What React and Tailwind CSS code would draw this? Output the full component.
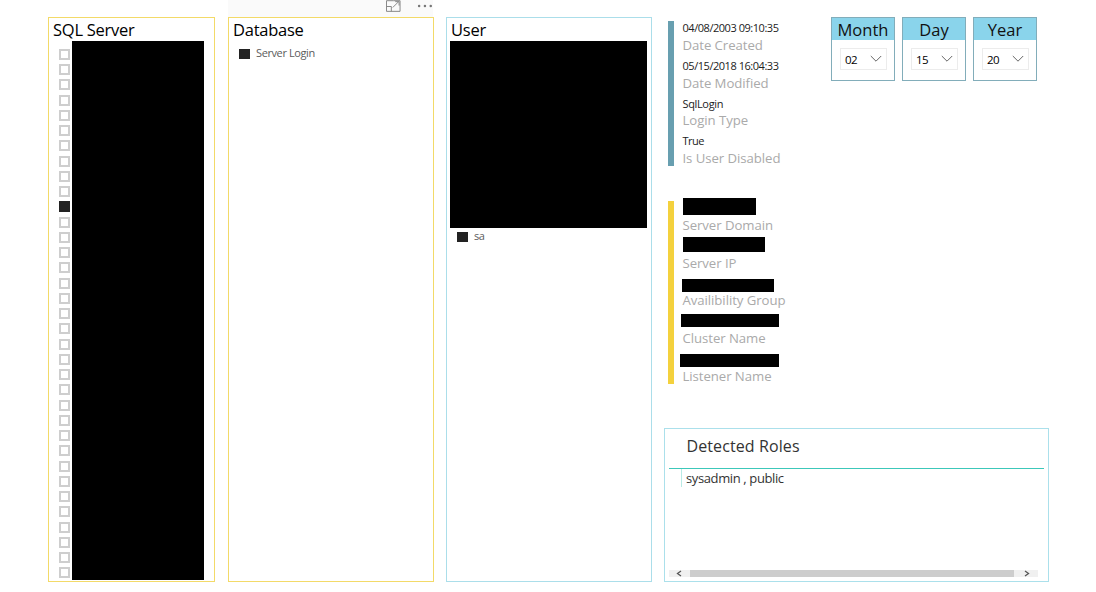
const SERVER_ROWS = Array.from({ length: 35 }, (_, i) => i === 10);

const LOGIN_FACTS = [
  { value: '04/08/2003 09:10:35', label: 'Date Created', item: 'h-[38px]', line: 'h-[16px] tracking-[-0.46px]' },
  { value: '05/15/2018 16:04:33', label: 'Date Modified', item: 'h-[38px]', line: 'h-[16px] tracking-[-0.46px]' },
  { value: 'SqlLogin', label: 'Login Type', item: 'h-[37px]', line: 'h-[15px] tracking-[-0.35px]' },
  { value: 'True', label: 'Is User Disabled', item: 'h-[38px]', line: 'h-[16px] tracking-[-0.55px]' },
];

const SERVER_FACTS = [
  { label: 'Server Domain', item: 'h-[38px]', bar: 'mt-[3px] ml-[0.5px] h-[17px] w-[73px]' },
  { label: 'Server IP', item: 'h-[37px]', bar: 'mt-[4px] ml-[0.5px] h-[15px] w-[82px]' },
  { label: 'Availibility Group', item: 'h-[38px]', bar: 'mt-[9px] -ml-[0.5px] h-[13px] w-[92px]' },
  { label: 'Cluster Name', item: 'h-[38px]', bar: 'mt-[6px] -ml-[1.5px] h-[13px] w-[98px]' },
  { label: 'Listener Name', item: 'h-[38px]', bar: 'mt-[8px] -ml-[2.5px] h-[13px] w-[99px]' },
];

const SLICERS = [
  { title: 'Month', value: '02' },
  { title: 'Day', value: '15' },
  { title: 'Year', value: '20' },
];

function Title({ children }) {
  return (
    <h2 className="h-[23px] shrink-0 pl-[4px] text-[16.5px] leading-[23px] tracking-[-0.25px] text-black">{children}</h2>
  );
}

function Checked({ label }) {
  return (
    <div className="flex h-[16px] items-center pl-[10px]">
      <span className="mt-[2px] h-[10.5px] w-[11px] bg-[#222]" />
      <span className="ml-[6px] text-[11px] leading-[16px] tracking-[-0.4px] text-[#5c5c5c]">{label}</span>
    </div>
  );
}

function Chevron() {
  return (
    <svg width="12" height="8" viewBox="0 0 12 8" fill="none" stroke="#666" strokeWidth="1">
      <path d="M0.8 1 L6 6.2 L11.2 1" />
    </svg>
  );
}

export default function App() {
  return (
    <main className="flex h-[592px] w-[1096px] items-start overflow-hidden bg-white pl-[48px] font-['Open_Sans','Noto_Sans',sans-serif]">
      <section className="mt-[17px] flex h-[565px] w-[167px] flex-col border border-[#f3da68]">
        <Title>SQL Server</Title>
        <div className="flex">
          <div className="flex h-[537px] w-[23px] flex-col overflow-hidden pt-[7.75px] pl-[10px]">
            {SERVER_ROWS.map((on, i) => (
              <span key={i} className="flex h-[15.25px] shrink-0 items-start">
                {on ? (
                  <span className="h-[11px] w-[11px] bg-[#222]" />
                ) : (
                  <span className="size-[11px] border-2 border-[#cecece] bg-white" />
                )}
              </span>
            ))}
          </div>
          <div className="h-[539px] w-[132px] bg-black" />
        </div>
      </section>

      <section className="ml-[13px] w-[206px]">
        <div className="flex h-[17px] w-[205px] items-start bg-[#fafafa] pl-[158px]">
          <svg width="15" height="13" viewBox="0 0 15 13" fill="none" stroke="#858585" strokeWidth="1">
            <path d="M8 0.5H0.5V11.5H14.5V0.5H8M0.5 6.5H5.5V11.5M7 7.5L13 1.5M9.5 1.5H13.5V5.5" />
          </svg>
          <svg className="ml-[16px]" width="17" height="13" viewBox="0 0 17 13" fill="#777">
            <circle cx="2.2" cy="6" r="1.3" />
            <circle cx="8.2" cy="6" r="1.3" />
            <circle cx="14.2" cy="6" r="1.3" />
          </svg>
        </div>
        <div className="h-[565px] border border-[#f3da68]">
          <Title>Database</Title>
          <div className="pt-[4px]">
            <Checked label="Server Login" />
          </div>
        </div>
      </section>

      <section className="mt-[17px] ml-[12px] h-[565px] w-[206px] border border-[#abdeea]">
        <Title>User</Title>
        <div className="ml-[3px] h-[187px] w-[197px] bg-black" />
        <Checked label="sa" />
      </section>

      <div className="ml-[12px] flex h-[592px] w-[385px] flex-col">
        <div className="flex h-[195px] items-start">
          <div className="mt-[21px] ml-[4px] h-[145px] w-[6.4px] bg-[#689fb0]" />
          <dl className="mt-[20px] ml-[8.1px] w-[148.5px]">
            {LOGIN_FACTS.map((f) => (
              <div key={f.label} className={f.item}>
                <dd className={`text-[11px] leading-[16px] text-[#222] ${f.line}`}>{f.value}</dd>
                <dt className="text-[13.2px] leading-[18px] tracking-[-0.06px] text-[#aaa]">{f.label}</dt>
              </div>
            ))}
          </dl>
          <div className="mt-[17px] flex gap-[7px]">
            {SLICERS.map((s) => (
              <div key={s.title} className="h-[64px] w-[64px] border border-[#82adba]">
                <h3 className="h-[22px] bg-[#8ad4eb] text-center text-[16.5px] leading-[24px] text-[#111]">{s.title}</h3>
                <div className="mt-[8px] ml-[8px] flex h-[22px] w-[47px] items-center justify-between border border-[#ececec] pr-[4px] pl-[4px]">
                  <span className="pt-px text-[11.5px] leading-[20px] tracking-[-0.6px] text-black">{s.value}</span>
                  <Chevron />
                </div>
              </div>
            ))}
          </div>
        </div>

        <div className="flex h-[233px] items-start">
          <div className="mt-[6px] ml-[4px] h-[183px] w-[6.4px] bg-[#f4d13d]" />
          <dl className="ml-[8.1px] w-[148px]">
            {SERVER_FACTS.map((f) => (
              <div key={f.label} className={f.item}>
                <dd className="flex h-[21px] items-start">
                  <span className={`shrink-0 bg-black ${f.bar}`} />
                </dd>
                <dt className="text-[13.2px] leading-[18px] tracking-[-0.06px] text-[#aaa]">{f.label}</dt>
              </div>
            ))}
          </dl>
        </div>

        <section className="flex h-[154px] flex-col border border-[#abe0eb] px-[4px]">
          <h2 className="h-[39px] pl-[17.5px] text-[16px] leading-[34px] tracking-[0.1px] text-[#333]">Detected Roles</h2>
          <div className="h-px shrink-0 bg-[#3cc8ba]" />
          <div className="flex h-[18px] shrink-0">
            <div className="ml-[12px] w-px bg-[#b9ebe5]" />
            <p className="ml-[4px] text-[13px] leading-[18px] tracking-[-0.38px] text-[#333]">sysadmin , public</p>
          </div>
          <div className="mt-[83px] flex h-[7px] w-[369px] shrink-0 items-center bg-[#f0f0f0]">
            <svg className="ml-[7px]" width="6" height="7" viewBox="0 0 6 7" fill="none" stroke="#555" strokeWidth="1.3">
              <path d="M5 1L1.5 3.5L5 6" />
            </svg>
            <div className="ml-[8px] h-[7px] w-[324px] bg-[#cdcdcd]" />
            <svg className="ml-[10px]" width="6" height="7" viewBox="0 0 6 7" fill="none" stroke="#555" strokeWidth="1.3">
              <path d="M1 1L4.5 3.5L1 6" />
            </svg>
          </div>
        </section>
      </div>
    </main>
  );
}
